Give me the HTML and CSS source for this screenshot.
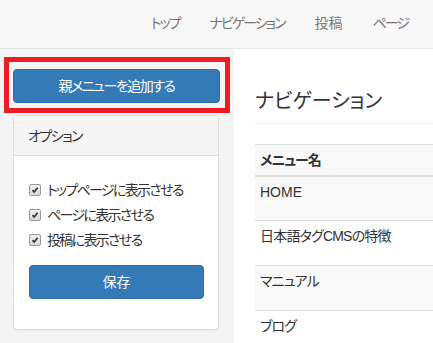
FILE: index.html
```html
<!DOCTYPE html>
<html lang="ja">
<head>
  <meta charset="UTF-8">
  <title>ナビゲーション</title>
  <link rel="stylesheet" href="styles.css">
</head>
<body>
  <nav class="navbar">
    <ul class="nav-links">
      <li>トップ</li>
      <li>ナビゲーション</li>
      <li class="kanji">投稿</li>
      <li>ページ</li>
    </ul>
  </nav>

  <div class="main">
    <aside class="sidebar">
      <div class="add-wrap">
        <button class="btn btn-add">親メニューを追加する</button>
        <span class="highlight"></span>
      </div>
      <div class="panel">
        <div class="panel-heading">オプション</div>
        <div class="panel-body">
          <label class="check">
            <span class="box"><svg viewBox="0 0 12 12"><path d="M3 6.2 L5 8.4 L9.2 3.4" /></svg></span>
            トップページに表示させる
          </label>
          <label class="check">
            <span class="box"><svg viewBox="0 0 12 12"><path d="M3 6.2 L5 8.4 L9.2 3.4" /></svg></span>
            ページに表示させる
          </label>
          <label class="check">
            <span class="box"><svg viewBox="0 0 12 12"><path d="M3 6.2 L5 8.4 L9.2 3.4" /></svg></span>
            投稿に表示させる
          </label>
          <button class="btn btn-save">保存</button>
        </div>
      </div>
    </aside>

    <section class="content">
      <h1 class="page-header">ナビゲーション</h1>
      <table class="menu-table">
        <thead>
          <tr><th>メニュー名</th></tr>
        </thead>
        <tbody>
          <tr><td>HOME</td></tr>
          <tr><td class="ja">日本語タグCMSの特徴</td></tr>
          <tr><td class="ja">マニュアル</td></tr>
          <tr><td class="ja">ブログ</td></tr>
        </tbody>
      </table>
    </section>
  </div>
</body>
</html>
```

FILE: styles.css
```css
* {
  margin: 0;
  padding: 0;
  box-sizing: border-box;
}

body {
  width: 433px;
  height: 343px;
  overflow: hidden;
  background: #fff;
  color: #333;
  font-family: "Liberation Sans", "Noto Sans CJK JP", sans-serif;
  font-size: 14px;
  line-height: 20px;
  font-feature-settings: "palt";
}

.navbar {
  height: 49px;
  background: #f8f8f8;
  border-bottom: 1px solid #e7e7e7;
  display: flex;
  justify-content: flex-end;
}

.nav-links {
  list-style: none;
  display: flex;
  margin-right: 10px;
}

.nav-links li {
  padding: 13px 15px 15px;
  color: #777;
  letter-spacing: -2px;
}

.nav-links li.kanji {
  letter-spacing: 0;
}

.main {
  display: flex;
  height: 294px;
}

.sidebar {
  width: 234px;
  flex-shrink: 0;
  background: #f4f4f4;
  padding: 20px 14px 0 13px;
}

.add-wrap {
  position: relative;
}

.highlight {
  position: absolute;
  top: -12px;
  left: -9px;
  right: -10px;
  bottom: -10px;
  border: 5px solid #ec1c24;
}

.btn {
  display: block;
  width: 100%;
  height: 34px;
  border: 1px solid #2e6da4;
  border-radius: 4px;
  background: #337ab7;
  color: #fff;
  font: inherit;
  font-size: 14px;
  letter-spacing: -1.5px;
}

.panel {
  margin-top: 12px;
  width: 206px;
  background: #fff;
  border: 1px solid #ddd;
  border-radius: 4px;
  box-shadow: 0 1px 1px rgba(0, 0, 0, 0.05);
}

.panel-heading {
  background: #f5f5f5;
  border-bottom: 1px solid #ddd;
  padding: 10px 14px 9px;
  border-radius: 3px 3px 0 0;
  letter-spacing: -1.5px;
}

.panel-body {
  padding: 24px 14px 30px 15px;
  display: flex;
  flex-direction: column;
  gap: 5px;
}

.check {
  display: flex;
  align-items: center;
  height: 20px;
  gap: 6px;
  letter-spacing: -1.7px;
}

.box {
  width: 12px;
  height: 12px;
  border: 1px solid #9a9a9a;
  border-radius: 2px;
  background: linear-gradient(#f2f2f2, #d8d8d8);
  display: flex;
}

.box svg {
  width: 10px;
  height: 10px;
}

.box path {
  fill: none;
  stroke: #333;
  stroke-width: 2;
}

.btn-save {
  margin-top: 10px;
  width: 175px;
  letter-spacing: 0;
}

.content {
  flex: 1;
  padding-left: 21px;
}

.page-header {
  margin-top: 41px;
  padding-bottom: 11px;
  border-bottom: 1px solid #eee;
  font-size: 20px;
  line-height: 22px;
  font-weight: 400;
  color: #333;
}

.menu-table {
  margin-top: 20px;
  width: 100%;
  border-collapse: collapse;
}

.menu-table th {
  text-align: left;
  background: #f9f9f9;
  border-top: 1px solid #ddd;
  border-bottom: 2px solid #ddd;
  padding: 5px;
  font-weight: 700;
  height: 31px;
  letter-spacing: -1px;
}

.menu-table td {
  padding: 5px 5px 3px;
  height: 45px;
  vertical-align: top;
  border-top: 1px solid #ddd;
}

.menu-table td.ja {
  letter-spacing: -0.8px;
}

.menu-table tbody tr:first-child td {
  border-top: 0;
  height: 44px;
}

.menu-table tbody tr:nth-child(odd) {
  background: #f9f9f9;
}
```
